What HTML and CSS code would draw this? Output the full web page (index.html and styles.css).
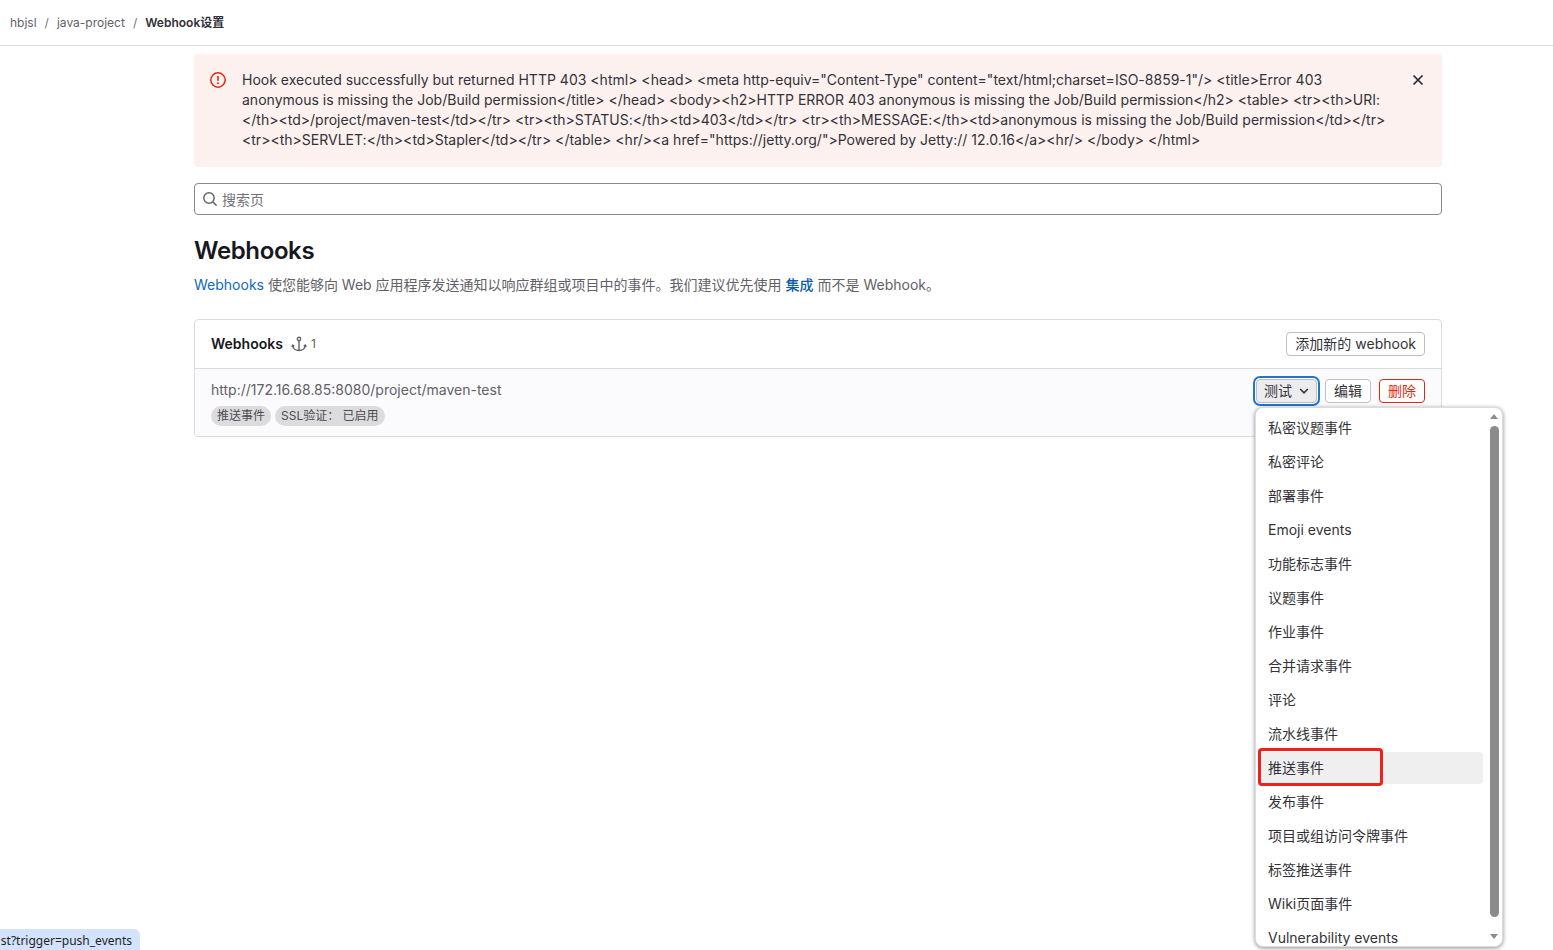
FILE: index.html
```html
<!DOCTYPE html>
<html lang="zh">
<head>
<meta charset="utf-8">
<title>Webhook设置</title>
<link rel="stylesheet" href="styles.css">
</head>
<body>
<header class="topbar">
  <nav class="crumbs">
    <a>hbjsl</a><span class="sep">/</span><a>java-project</a><span class="sep">/</span><strong>Webhook设置</strong>
  </nav>
</header>
<main class="page">
  <div class="alert">
    <svg class="alert-icon" width="16" height="16" viewBox="0 0 16 16"><circle cx="8" cy="8" r="7.2" fill="none" stroke="#dd2b0e" stroke-width="1.5"/><rect x="7.2" y="3.8" width="1.6" height="5.2" rx=".8" fill="#dd2b0e"/><circle cx="8" cy="11.3" r="1" fill="#dd2b0e"/></svg>
    <p class="alert-text">Hook executed successfully but returned HTTP 403 &lt;html&gt; &lt;head&gt; &lt;meta http-equiv="Content-Type" content="text/html;charset=ISO-8859-1"/&gt; &lt;title&gt;Error 403 anonymous is missing the Job/Build permission&lt;/title&gt; &lt;/head&gt; &lt;body&gt;&lt;h2&gt;HTTP ERROR 403 anonymous is missing the Job/Build permission&lt;/h2&gt; &lt;table&gt; &lt;tr&gt;&lt;th&gt;URI: &lt;/th&gt;&lt;td&gt;/project/maven-test&lt;/td&gt;&lt;/tr&gt; &lt;tr&gt;&lt;th&gt;STATUS:&lt;/th&gt;&lt;td&gt;403&lt;/td&gt;&lt;/tr&gt; &lt;tr&gt;&lt;th&gt;MESSAGE:&lt;/th&gt;&lt;td&gt;anonymous is missing the Job/Build permission&lt;/td&gt;&lt;/tr&gt; &lt;tr&gt;&lt;th&gt;SERVLET:&lt;/th&gt;&lt;td&gt;Stapler&lt;/td&gt;&lt;/tr&gt; &lt;/table&gt; &lt;hr/&gt;&lt;a href="https://jetty.org/"&gt;Powered by Jetty:// 12.0.16&lt;/a&gt;&lt;hr/&gt; &lt;/body&gt; &lt;/html&gt;</p>
    <svg class="alert-close" width="16" height="16" viewBox="0 0 16 16"><path d="M3.5 3.5l9 9M12.5 3.5l-9 9" stroke="#28272d" stroke-width="1.7" fill="none"/></svg>
  </div>

  <div class="search">
    <svg width="16" height="16" viewBox="0 0 16 16"><circle cx="7" cy="7" r="5.2" fill="none" stroke="#666" stroke-width="1.5"/><path d="M11 11l3.6 3.6" stroke="#666" stroke-width="1.5" fill="none"/></svg>
    <span>搜索页</span>
  </div>

  <h1 class="title">Webhooks</h1>
  <p class="desc"><a class="link">Webhooks</a> 使您能够向 Web 应用程序发送通知以响应群组或项目中的事件。我们建议优先使用 <a class="link-strong">集成</a> 而不是 Webhook。</p>

  <section class="card">
    <div class="card-head">
      <div class="card-title">
        <strong>Webhooks</strong>
        <span class="count">
          <svg width="16" height="16" viewBox="0 0 16 16" fill="none" stroke="#626168" stroke-width="1.4"><circle cx="8" cy="3" r="1.7"/><path d="M8 4.7V14.5M1.8 9.2c0 3.2 2.6 5.3 6.2 5.3s6.2-2.1 6.2-5.3M.6 10.6l1.2-1.6 1.4 1.5M12.8 10.5l1.4-1.5 1.2 1.6"/></svg>
          1
        </span>
      </div>
      <button class="btn">添加新的 webhook</button>
    </div>
    <div class="hook">
      <div class="hook-info">
        <div class="hook-url">http://172.16.68.85:8080/project/maven-test</div>
        <div class="tags"><span class="tag">推送事件</span><span class="tag">SSL验证： 已启用</span></div>
      </div>
      <div class="hook-actions">
        <button class="btn btn-test"><span class="btn-label">测试</span>
          <svg class="chevron" width="12" height="12" viewBox="0 0 12 12" fill="none"><path d="M2.2 4L6 7.8 9.800 4" stroke="#333238" stroke-width="1.6"/></svg>
        </button>
        <button class="btn">编辑</button>
        <button class="btn btn-danger">删除</button>
      </div>
    </div>
  </section>
</main>

<div class="menu">
  <ul class="menu-list">
    <li>私密议题事件</li>
    <li>私密评论</li>
    <li>部署事件</li>
    <li>Emoji events</li>
    <li>功能标志事件</li>
    <li>议题事件</li>
    <li>作业事件</li>
    <li>合并请求事件</li>
    <li>评论</li>
    <li>流水线事件</li>
    <li class="active">推送事件</li>
    <li>发布事件</li>
    <li>项目或组访问令牌事件</li>
    <li>标签推送事件</li>
    <li>Wiki页面事件</li>
    <li>Vulnerability events</li>
  </ul>
  <div class="scrollbar">
    <span class="arrow-up"></span>
    <span class="thumb"></span>
    <span class="arrow-down"></span>
  </div>
</div>
<div class="annotation"></div>
<div class="status">st?trigger=push_events</div>
</body>
</html>
```

FILE: styles.css
```css
* { box-sizing: border-box; }
html, body { margin: 0; padding: 0; height: 950px; overflow: hidden; }
body {
  background: #fff;
  color: #333238;
  font-family: Inter, "Noto Sans CJK SC", sans-serif;
  font-size: 14px;
  line-height: 20px;
}
p { margin: 0; }
.topbar {
  height: 46px;
  border-bottom: 1px solid #dcdcde;
  padding: 0 10px;
  display: flex;
  align-items: center;
}
.crumbs { display: flex; align-items: center; font-size: 12px; color: #626168; }
.crumbs .sep { margin: 0 8px; color: #737278; }
.crumbs strong { color: #333238; font-weight: 600; }
.page { width: 1248px; margin: 8px 0 0 194px; }
.alert {
  display: flex;
  background: #fcf1ef;
  border-radius: 4px;
  height: 113px;
  padding: 16px;
}
.alert-icon { flex: none; margin: 2px 8px 0 0; }
.alert-text { flex: 1; margin-left: 8px; padding-right: 4px; letter-spacing: .008px; }
.alert-close { flex: none; margin: 2px 0 0 12px; }
.search {
  margin-top: 16px;
  height: 32px;
  border: 1px solid #89888d;
  border-radius: 4px;
  display: flex;
  align-items: center;
  gap: 3px;
  padding: 0 7px;
  color: #737278;
}
.search span { margin-left: 1px; position: relative; top: 1px; }
.title { margin: 20px 0 0; font-size: 24px; line-height: 32px; font-weight: 600; color: #18171d; letter-spacing: -.375px; }
.desc { margin-top: 8px; color: #626168; }
.link { color: #1068bf; }
.link-strong { color: #0b5cad; font-weight: 500; }
.card {
  margin-top: 24px;
  border: 1px solid #dcdcde;
  border-radius: 4px;
  height: 118px;
}
.card-head {
  height: 49px;
  display: flex;
  align-items: center;
  justify-content: space-between;
  padding: 0 16px;
  border-bottom: 1px solid #dcdcde;
}
.card-title { display: flex; align-items: center; gap: 8px; }
.card-title strong { font-weight: 600; color: #18171d; }
.count { display: flex; align-items: center; gap: 4px; font-size: 12px; color: #626168; }
.btn {
  font: inherit;
  color: #333238;
  background: #fff;
  border: 1px solid #bfbfc3;
  border-radius: 4px;
  height: 24px;
  padding: 0 8px;
  display: inline-flex;
  align-items: center;
  line-height: 20px;
  white-space: nowrap;
}
.hook {
  height: 67px;
  background: #fbfafd;
  border-radius: 0 0 4px 4px;
  padding: 11px 16px 0;
  display: flex;
  justify-content: space-between;
}
.hook-url { color: #626168; }
.tags { display: flex; gap: 4px; margin-top: 6px; }
.tag {
  background: #dcdcde;
  color: #4c4b51;
  border-radius: 10px;
  height: 20px;
  padding: 0 6px;
  font-size: 12px;
  white-space: pre;
}
.hook-actions { display: flex; gap: 8px; align-items: flex-start; margin-top: -1px; }
.btn-test {
  flex: none;
  gap: 6px;
  padding: 0 7px;
  background: #ececef;
  box-shadow: 0 0 0 1px #fff, 0 0 0 3px #1f75cb;
  width: 61px;
}
.btn-label, .chevron { flex: none; }
.btn-danger { color: #dd2b0e; border-color: #dd2b0e; }
.menu {
  position: absolute;
  left: 1255px;
  top: 407px;
  width: 248px;
  height: 540px;
  background: #fff;
  border-radius: 8px;
  border: 1px solid #dcdcde;
  box-shadow: 0 1px 4px rgba(0,0,0,.45);
  overflow: hidden;
  display: flex;
}
.menu-list {
  list-style: none;
  margin: 0;
  padding: 4px 0 0 4px;
  width: 227px;
}
.menu-list li {
  height: 32px;
  margin-bottom: 2px;
  padding: 0 8px;
  line-height: 32px;
  border-radius: 4px;
  color: #333238;
  white-space: nowrap;
}
.menu-list .active { background: #efefef; }
.scrollbar { flex: 1; position: relative; }
.thumb {
  position: absolute;
  left: 7px;
  top: 18px;
  width: 9px;
  height: 491px;
  border-radius: 5px;
  background: #8b8b8b;
}
.arrow-up, .arrow-down {
  position: absolute;
  left: 7px;
  width: 0;
  height: 0;
  border-left: 4.5px solid transparent;
  border-right: 4.5px solid transparent;
}
.arrow-up { top: 6px; border-bottom: 5px solid #8b8b8b; }
.arrow-down { top: 526px; border-top: 5px solid #8b8b8b; }
.annotation {
  position: absolute;
  left: 1258px;
  top: 748px;
  width: 125px;
  height: 38px;
  border: 3px solid #f0201c;
  border-radius: 4px;
}
.status {
  position: fixed;
  left: 0;
  bottom: 0;
  width: 140px;
  height: 21px;
  padding-right: 8px;
  background: #d3e3fd;
  border-radius: 0 6px 0 0;
  font-family: "Noto Sans", sans-serif;
  font-size: 12px;
  line-height: 24px;
  color: #1f1f1f;
  text-align: right;
  white-space: nowrap;
  overflow: hidden;
}
```
